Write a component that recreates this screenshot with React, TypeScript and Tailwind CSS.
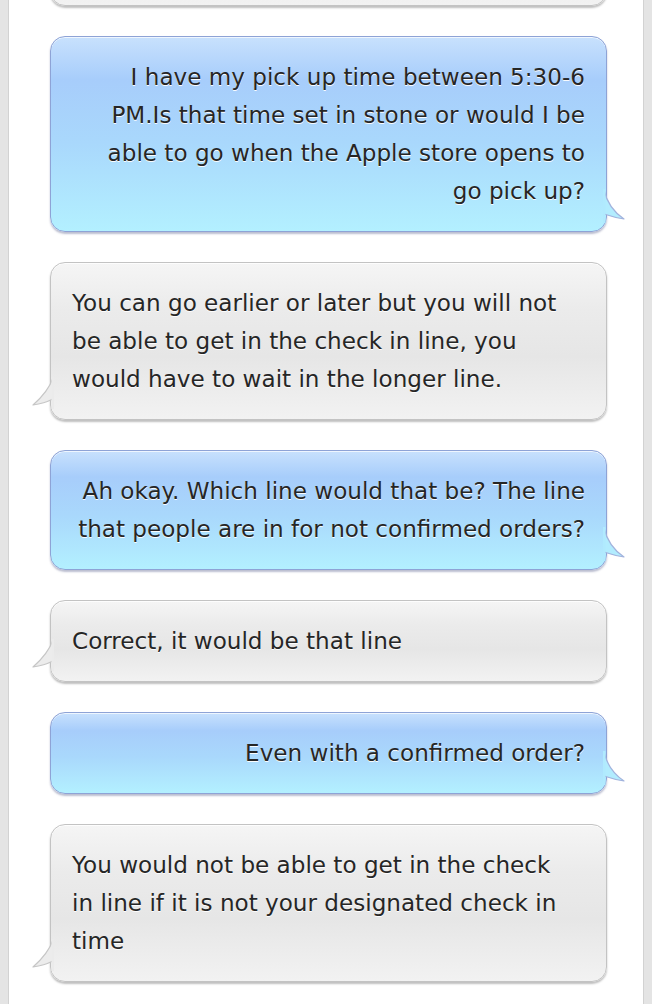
import React from 'react';

type Msg = { from: 'me' | 'them'; lines: string[] };

const messages: Msg[] = [
  {
    from: 'me',
    lines: [
      'I have my pick up time between 5:30-6',
      'PM.Is that time set in stone or would I be',
      'able to go when the Apple store opens to',
      'go pick up?',
    ],
  },
  {
    from: 'them',
    lines: [
      'You can go earlier or later but you will not',
      'be able to get in the check in line, you',
      'would have to wait in the longer line.',
    ],
  },
  {
    from: 'me',
    lines: ['Ah okay. Which line would that be? The line', 'that people are in for not confirmed orders?'],
  },
  { from: 'them', lines: ['Correct, it would be that line'] },
  { from: 'me', lines: ['Even with a confirmed order?'] },
  {
    from: 'them',
    lines: [
      'You would not be able to get in the check',
      'in line if it is not your designated check in',
      'time',
    ],
  },
];

const BlueTail = () => (
  <svg
    className="absolute right-[-21px] bottom-[8px]"
    width="24"
    height="34"
    viewBox="0 0 24 34"
  >
    <path
      d="M1 1 C 4 14, 12 24, 21 30 C 14 29, 7 27, 1 25 Z"
      fill="#b2ecfe"
      stroke="#a2b3dd"
      strokeWidth="1.2"
      strokeLinejoin="round"
    />
    <rect x="0" y="0" width="2.5" height="34" fill="#b0eafe" />
  </svg>
);

const GrayTail = () => (
  <svg
    className="absolute left-[-20px] bottom-[10px]"
    width="23"
    height="32"
    viewBox="0 0 23 32"
  >
    <path
      d="M22 1 C 18 12, 10 21, 2 28 C 9 27, 16 25, 22 22 Z"
      fill="#ececec"
      stroke="#c6c6c6"
      strokeWidth="1.2"
      strokeLinejoin="round"
    />
    <rect x="20.5" y="0" width="2.5" height="32" fill="#ebebeb" />
  </svg>
);

const Bubble = ({ msg }: { msg: Msg }) => {
  const mine = msg.from === 'me';
  return (
    <div
      className={`relative whitespace-nowrap rounded-[15px] border py-[21px] text-[23.1px] leading-[38px] text-[#262626] [text-shadow:0_1px_0_rgba(255,255,255,0.95)] ${
        mine
          ? 'pl-[18px] pr-[21px] text-right border-[#8ea3d6] bg-[linear-gradient(to_bottom,#c8e1fd_0%,#a7cdfb_22%,#a9d8fc_55%,#b3f0ff_100%)] shadow-[0_2px_2px_rgba(60,70,120,0.35),inset_0_1px_0_rgba(255,255,255,0.7)]'
          : 'pl-[21px] pr-[18px] text-left border-[#c3c3c3] bg-[linear-gradient(to_bottom,#f5f5f5_0%,#ebebeb_30%,#e6e6e6_60%,#f2f2f2_100%)] shadow-[0_2px_2px_rgba(0,0,0,0.25),inset_0_1px_0_rgba(255,255,255,0.8)]'
      }`}
    >
      {msg.lines.map((l, i) => (
        <div key={i}>{l}</div>
      ))}
      {mine ? <BlueTail /> : <GrayTail />}
    </div>
  );
};

export default function App() {
  return (
    <div className="h-[1004px] overflow-hidden bg-[#e4e4e4] px-[8px] font-['DejaVu_Sans',Verdana,sans-serif]">
      <div className="flex h-full flex-col gap-[30px] border-x border-[#d2d2d2] bg-white pl-[41px] pr-[36px]">
        <div className="mt-[-60px] h-[66px] shrink-0 rounded-[15px] border border-[#c3c3c3] bg-[linear-gradient(to_bottom,#e6e6e6_0%,#f2f2f2_100%)] shadow-[0_2px_2px_rgba(0,0,0,0.25)]" />
        {messages.map((m, i) => (
          <Bubble key={i} msg={m} />
        ))}
      </div>
    </div>
  );
}
